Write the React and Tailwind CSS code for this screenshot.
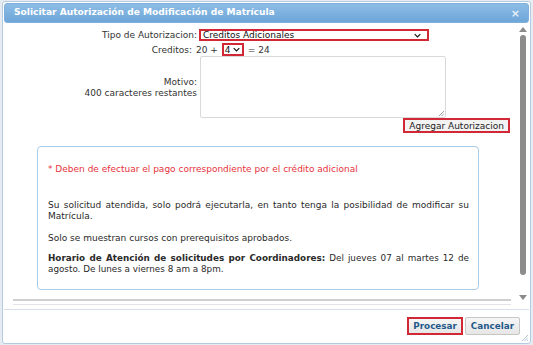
import React from "react";

const Chevron = ({ className }) => (
  <svg viewBox="0 0 10 6" className={className} fill="none" stroke="currentColor" strokeWidth="1.6">
    <path d="M1 1l4 4 4-4" />
  </svg>
);

const App = () => {
  return (
    <div className="w-[533px] h-[345px] bg-[#e6ecf1] pt-[1px] pl-[2px] font-['DejaVu_Sans',sans-serif] text-[#333]">
      <div className="w-[529px] h-[343px] bg-white border border-[#b3cbe0] rounded-[3px] p-[1px] flex flex-col">
        {/* title bar */}
        <div className="h-[20px] shrink-0 rounded-[3px] border border-[#7fb0db] bg-gradient-to-b from-[#8dbde6] to-[#6da6d8] flex items-center justify-between pl-[9px] pr-[8px]">
          <span className="text-white font-bold text-[9.1px] leading-none">
            Solicitar Autorización de Modificación de Matrícula
          </span>
          <span className="text-[#e6f0f9] font-bold text-[11px] leading-none">×</span>
        </div>

        {/* body */}
        <div className="flex h-[286px] shrink-0">
          <div className="flex-1 flex flex-col">
            <div className="pt-[6px] text-[9px] leading-[12px]">
              <div className="flex items-center">
                <div className="w-[193px] text-right">Tipo de Autorizacion:</div>
                <div className="ml-[2px] w-[230px] h-[12px] border-2 border-[#d22734] flex items-center justify-between pl-[2px] pr-[6px] text-[#111]">
                  <span>Creditos Adicionales</span>
                  <Chevron className="w-[7px] h-[5px]" />
                </div>
              </div>
              <div className="flex items-center mt-[2px]">
                <div className="w-[188px] text-right">Creditos:</div>
                <div className="flex items-center pl-[4px] gap-[4px]">
                  <span>20 +</span>
                  <div className="w-[22px] h-[13px] border-2 border-[#d22734] flex items-center gap-[2px] pl-[1px] text-[#111]">
                    <span>4</span>
                    <Chevron className="w-[7px] h-[5px]" />
                  </div>
                  <span>= 24</span>
                </div>
              </div>
              <div className="flex">
                <div className="w-[193px] text-right pt-[21px] leading-[11px]">
                  Motivo:
                  <br />
                  400 caracteres restantes
                </div>
                <div className="ml-[3px] w-[246px] h-[62px] border border-[#d9d9d9] rounded-[2px] relative">
                  <svg viewBox="0 0 6 6" className="absolute right-[1px] bottom-[1px] w-[6px] h-[6px]" stroke="#888" strokeWidth="0.8">
                    <path d="M1 6L6 1M3.5 6L6 3.5" />
                  </svg>
                </div>
              </div>
              <div className="flex justify-end pr-[7px]">
                <div className="h-[15px] px-[4px] border-2 border-[#d22734] bg-[#f3f3f3] text-[#222] flex items-center">
                  Agregar Autorizacion
                </div>
              </div>
            </div>

            {/* info box */}
            <div className="ml-[33px] mt-[13px] w-[442px] h-[144px] border border-[#a9cde9] rounded-[4px] pl-[10px] pr-[9px] pt-[17px] text-[9px] leading-[11px] text-[#2a2a2a]">
              <p className="text-[#e5323c]">* Deben de efectuar el pago correspondiente por el crédito adicional</p>
              <p className="mt-[25px] text-justify">
                Su solicitud atendida, solo podrá ejecutarla, en tanto tenga la posibilidad de modificar su Matrícula.
              </p>
              <p className="mt-[11px]">Solo se muestran cursos con prerequisitos aprobados.</p>
              <div className="mt-[9px] text-[8.8px]">
                <p className="whitespace-nowrap [text-align-last:justify]">
                  <span className="font-bold">Horario de Atención de solicitudes por Coordinadores:</span> Del jueves 07 al martes 12 de
                </p>
                <p>agosto. De lunes a viernes 8 am a 8pm.</p>
              </div>
            </div>

            <div className="mt-auto ml-[9px] mr-[6px] mb-[4px]">
              <div className="h-[2px] bg-[#cfcfcf]" />
              <div className="h-[1px] mt-[3px] bg-[#e4e4e4]" />
            </div>
          </div>

          {/* vertical scrollbar */}
          <div className="w-[12px] flex flex-col items-center pt-[4px] pb-[9px]">
            <svg viewBox="0 0 8 5" className="w-[8px] h-[5px]" fill="#8a8a8a">
              <path d="M0 5L4 0L8 5Z" />
            </svg>
            <div className="mt-[3px] w-[6px] h-[240px] rounded-[3px] bg-[#8c8c8c]" />
            <div className="flex-1" />
            <svg viewBox="0 0 8 5" className="w-[8px] h-[5px]" fill="#8a8a8a">
              <path d="M0 0L8 0L4 5Z" />
            </svg>
          </div>
        </div>

        {/* footer */}
        <div className="flex-1 border-t border-[#d5e0ea] flex justify-end items-start pt-[7px] pr-[9px] gap-[2px] relative">
          <button className="h-[18px] px-[4px] border-2 border-[#d22734] bg-gradient-to-b from-[#f6f6f6] to-[#e6e6e6] text-[#1f5a8a] font-semibold text-[8.8px] leading-none">
            Procesar
          </button>
          <button className="h-[18px] px-[5px] border border-[#c6c6c6] rounded-[2px] bg-gradient-to-b from-[#f6f6f6] to-[#e6e6e6] text-[#1f5a8a] font-semibold text-[8.8px] leading-none">
            Cancelar
          </button>
          <svg viewBox="0 0 8 8" className="absolute right-[1px] bottom-[1px] w-[8px] h-[8px]" stroke="#9fb4c8" strokeWidth="0.8">
            <path d="M2 8L8 2M4.5 8L8 4.5M7 8L8 7" />
          </svg>
        </div>
      </div>
    </div>
  );
};

export default App;
